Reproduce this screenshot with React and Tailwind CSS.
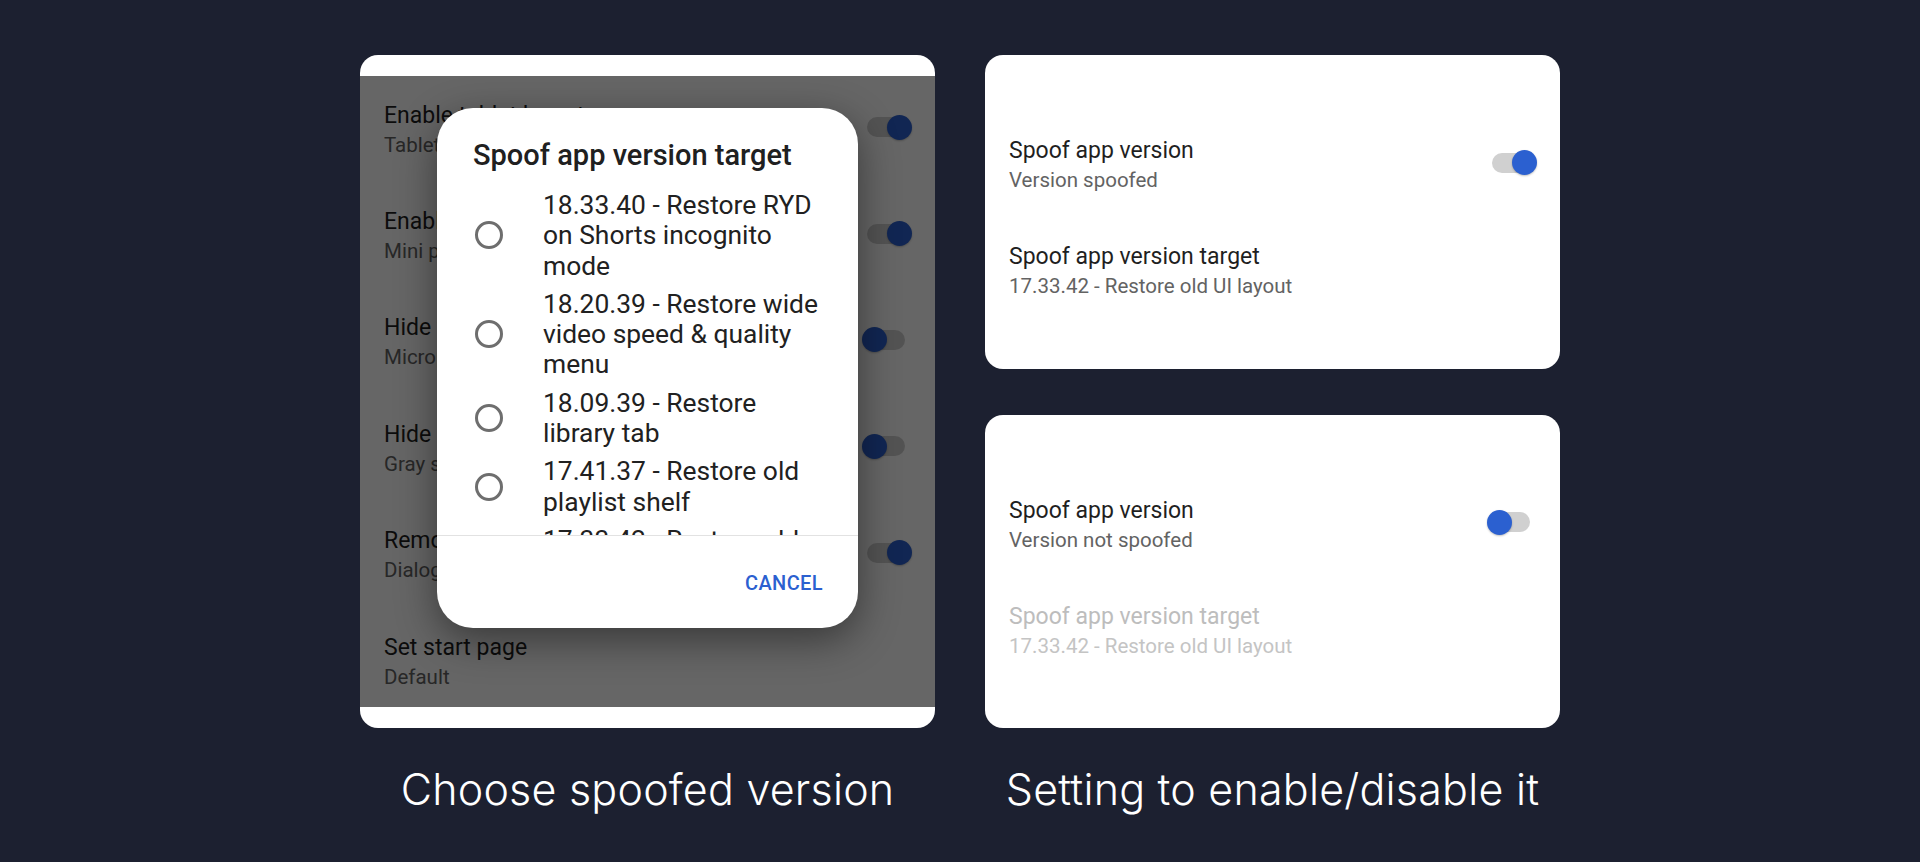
import React from "react";

const ROBOTO = { fontFamily: 'Roboto, "Noto Sans", "Liberation Sans", sans-serif' };
const INTER = { fontFamily: 'Inter, "Noto Sans", "Liberation Sans", sans-serif' };

function Toggle({ on }) {
  return (
    <div className="relative w-[50px] h-[25px] shrink-0 mb-[4px]">
      <div className="absolute left-[5.5px] top-[2.5px] w-[38px] h-[20px] rounded-full bg-[#d0d0d0]" />
      <div
        className={
          "absolute top-0 w-[25px] h-[25px] rounded-full bg-[#2b60d0] shadow-[0_1px_2px_rgba(0,0,0,0.25)] " +
          (on ? "right-0" : "left-0")
        }
      />
    </div>
  );
}

function Row({ title, sub, toggle, h, disabled }) {
  return (
    <div className={"flex items-center justify-between pl-[24px] pr-[23.5px] " + h}>
      <div className="flex flex-col whitespace-nowrap">
        <div className={"text-[23px] leading-[27px] " + (disabled ? "text-[#bdbdbd]" : "text-[#1f1f1f]")}>
          {title}
        </div>
        <div className={"text-[20.5px] leading-[24px] mt-[4px] " + (disabled ? "text-[#c4c4c4]" : "text-[#636363]")}>
          {sub}
        </div>
      </div>
      {toggle !== undefined && <Toggle on={toggle} />}
    </div>
  );
}

const screenRows = [
  { t: "Enable tablet layout", s: "Tablet layout is enabled", on: true },
  { t: "Enable tablet mini player", s: "Mini player is enabled", on: true },
  { t: "Hide floating microphone button", s: "Microphone button shown", on: false },
  { t: "Hide gray separator", s: "Gray separators are shown", on: false },
  { t: "Remove viewer discretion dialog", s: "Dialog will be removed", on: true },
  { t: "Set start page", s: "Default" },
];

const items = [
  ["18.33.40 - Restore RYD", "on Shorts incognito", "mode"],
  ["18.20.39 - Restore wide", "video speed & quality", "menu"],
  ["18.09.39 - Restore", "library tab"],
  ["17.41.37 - Restore old", "playlist shelf"],
  ["17.33.42 - Restore old", "UI layout"],
  ["17.30.34 - Restore old", "Shorts player"],
];

function Dialog() {
  return (
    <div className="absolute left-[77px] top-[32px] w-[421px] h-[520px] bg-white rounded-[36px] flex flex-col overflow-hidden shadow-[0_12px_40px_rgba(0,0,0,0.45)]">
      <div className="pt-[31px] px-[36px] text-[29px] leading-[32px] font-medium text-[#202020] whitespace-nowrap">
        Spoof app version target
      </div>
      <div className="h-[364px] overflow-hidden pt-[15px] flex flex-col">
        {items.map((lines, i) => (
          <div key={i} className="flex items-center py-[4px] pl-[38px] shrink-0">
            <div className="w-[28px] h-[28px] rounded-full border-[3px] border-[#6e6e6e] shrink-0" />
            <div className="ml-[40px] text-[26.4px] leading-[30.3px] text-[#212121] whitespace-nowrap">
              {lines.map((l, j) => (
                <div key={j}>{l}</div>
              ))}
            </div>
          </div>
        ))}
      </div>
      <div className="h-px bg-[#e2e2e2] shrink-0" />
      <div className="flex-1 flex justify-end items-start pt-[35px] pr-[35px]">
        <span className="text-[20px] leading-[24px] font-medium tracking-[0.02em] text-[#2b60d0]">CANCEL</span>
      </div>
    </div>
  );
}

export default function App() {
  return (
    <div className="min-h-screen w-full bg-[#1c2030] flex justify-center pt-[55px]" style={ROBOTO}>
      <div className="w-[1200px] flex flex-col">
        <div className="grid grid-cols-2 gap-[50px] h-[673px]">
          <div className="bg-white rounded-[18px] overflow-hidden py-[21px]">
            <div className="relative h-[631px] overflow-hidden bg-white">
              <div className="flex flex-col">
                {screenRows.map((r, i) => (
                  <Row key={i} title={r.t} sub={r.s} toggle={r.on} h="h-[106.4px] shrink-0" />
                ))}
              </div>
              <div className="absolute inset-0 bg-black/60" />
              <Dialog />
            </div>
          </div>
          <div className="flex flex-col gap-[46px]">
            <div className="flex-1 bg-white rounded-[18px] pt-[56.5px]">
              <Row title="Spoof app version" sub="Version spoofed" toggle={true} h="h-[106px]" />
              <Row title="Spoof app version target" sub="17.33.42 - Restore old UI layout" h="h-[106px]" />
            </div>
            <div className="flex-1 bg-white rounded-[18px] pt-[56.5px]">
              <Row title="Spoof app version" sub="Version not spoofed" toggle={false} h="h-[106px]" />
              <Row title="Spoof app version target" sub="17.33.42 - Restore old UI layout" h="h-[106px]" disabled />
            </div>
          </div>
        </div>
        <div className="grid grid-cols-2 gap-[50px] mt-[40px] text-white text-[43px] leading-[43px] font-light text-center tracking-[0.005em]" style={INTER}>
          <div>Choose spoofed version</div>
          <div>Setting to enable/disable it</div>
        </div>
      </div>
    </div>
  );
}
